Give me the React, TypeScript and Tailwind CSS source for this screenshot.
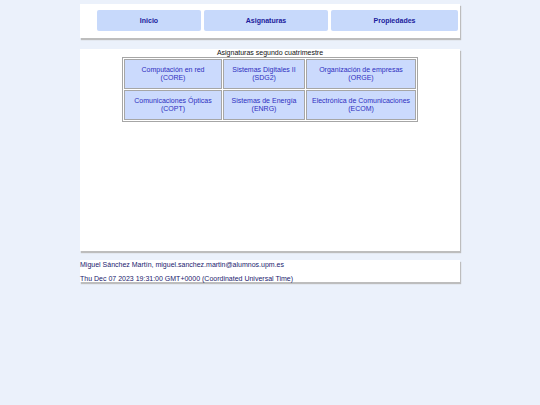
import React from "react";

const cells = [
  [
    ["Computación en red", "(CORE)", "w-[98px]"],
    ["Sistemas Digitales II", "(SDG2)", "w-[82px]"],
    ["Organización de empresas", "(ORGE)", "w-[110px]"],
  ],
  [
    ["Comunicaciones Ópticas", "(COPT)", "w-[98px]"],
    ["Sistemas de Energía", "(ENRG)", "w-[82px]"],
    ["Electrónica de Comunicaciones", "(ECOM)", "w-[110px]"],
  ],
];

export default function App() {
  return (
    <div className="min-h-[405px] w-full bg-[#ebf1fb] pt-[4px] text-[7px] leading-[8px]" style={{ fontFamily: '"Liberation Sans", Arial, sans-serif' }}>
      <div className="mx-auto w-[380px]">
        <div className="h-[34px] bg-white shadow-[1px_2px_1px_#bdbdbd] pl-[17px] pt-[6px] flex gap-[3px]">
          <div className="w-[104px] h-[21px] rounded-[2px] bg-[#c7d9fb] flex items-center justify-center font-bold text-[#1b1b9c]">Inicio</div>
          <div className="w-[124px] h-[21px] rounded-[2px] bg-[#c7d9fb] flex items-center justify-center font-bold text-[#1b1b9c]">Asignaturas</div>
          <div className="w-[127px] h-[21px] rounded-[2px] bg-[#c7d9fb] flex items-center justify-center font-bold text-[#1b1b9c]">Propiedades</div>
        </div>

        <div className="mt-[11px] h-[202px] bg-white shadow-[1px_2px_1px_#bdbdbd] flex flex-col items-center">
          <div className="h-[8px] text-[#111]">Asignaturas segundo cuatrimestre</div>
          <table className="border border-[#a6a6a6] border-separate border-spacing-[1px]">
            <tbody>
              {cells.map((row, i) => (
                <tr key={i}>
                  {row.map(([name, code, w]) => (
                    <td key={code} className={`${w} h-[30px] border border-[#a6a6a6] bg-[#cbdafd] text-center align-middle text-[#2e2ec0] p-0`}>
                      <div>{name}</div>
                      <div>{code}</div>
                    </td>
                  ))}
                </tr>
              ))}
            </tbody>
          </table>
        </div>

        <div className="mt-[9px] h-[22px] bg-white shadow-[1px_2px_1px_#bdbdbd] text-[#1a1a6e] flex flex-col">
          <div className="mt-[1px] h-[8px]">Miguel Sánchez Martín, miguel.sanchez.martin@alumnos.upm.es</div>
          <div className="mt-[6px] h-[8px]">Thu Dec 07 2023 19:31:00 GMT+0000 (Coordinated Universal Time)</div>
        </div>
      </div>
    </div>
  );
}
